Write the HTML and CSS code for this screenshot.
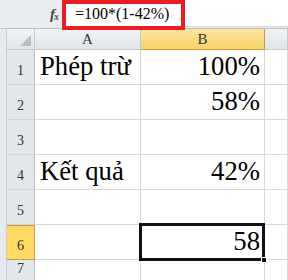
FILE: index.html
```html
<!DOCTYPE html>
<html lang="vi">
<head>
    <meta charset="UTF-8">
    <meta name="viewport" content="width=device-width, initial-scale=1.0">
    <title>Phép trừ phần trăm</title>
    <link rel="stylesheet" href="styles.css">
</head>
<body>
    <div class="formula-bar">
        <div class="fx-box"><span class="fx">f<sub>x</sub></span></div>
        <div class="formula-input">
            <span class="formula-text">=100*(1-42%)</span>
            <span class="highlight"></span>
        </div>
    </div>

    <div class="sheet">
        <div class="side-strip"></div>
        <div class="grid">
            <div class="corner"><span class="corner-mark"></span></div>
            <div class="col-head">A</div>
            <div class="col-head active">B</div>
            <div class="col-head"></div>

            <div class="row-head">1</div>
            <div class="cell">Phép trừ</div>
            <div class="cell num">100%</div>
            <div class="cell"></div>

            <div class="row-head">2</div>
            <div class="cell"></div>
            <div class="cell num">58%</div>
            <div class="cell"></div>

            <div class="row-head">3</div>
            <div class="cell"></div>
            <div class="cell num"></div>
            <div class="cell"></div>

            <div class="row-head">4</div>
            <div class="cell">Kết quả</div>
            <div class="cell num">42%</div>
            <div class="cell"></div>

            <div class="row-head">5</div>
            <div class="cell"></div>
            <div class="cell num"></div>
            <div class="cell"></div>

            <div class="row-head active">6</div>
            <div class="cell"></div>
            <div class="cell num selected">58<span class="sel-frame"><span class="fill-handle"></span></span></div>
            <div class="cell"></div>

            <div class="row-head last">7</div>
            <div class="cell"></div>
            <div class="cell num"></div>
            <div class="cell"></div>
        </div>
    </div>
</body>
</html>
```

FILE: styles.css
```css
/* Global Styles */
* {
    margin: 0;
    padding: 0;
    box-sizing: border-box;
}

body {
    width: 288px;
    height: 280px;
    overflow: hidden;
    background-color: #fff;
    font-family: "Liberation Serif", "Times New Roman", Tinos, "DejaVu Serif", serif;
    color: #000;
}

/* Formula bar */
.formula-bar {
    display: flex;
    height: 29px;
    background-color: #e9ecf0;
    border-bottom: 1px solid #b9bec5;
}

.fx-box {
    width: 62px;
    display: flex;
    justify-content: flex-end;
    align-items: center;
    padding-right: 4px;
}

.fx {
    font-style: italic;
    font-size: 15px;
    color: #4a4a4a;
    font-weight: bold;
    letter-spacing: -1px;
}

.fx sub {
    font-size: 10px;
    vertical-align: baseline;
    position: relative;
    top: 1px;
}

.formula-input {
    flex: 1;
    position: relative;
    background-color: #fff;
    margin-bottom: 1px;
    border-bottom: 1px solid #d4d7dc;
    padding-left: 13px;
    display: flex;
    align-items: center;
    font-size: 16px;
    padding-top: 1px;
}

.highlight {
    position: absolute;
    left: 0;
    top: 0;
    width: 123px;
    height: 30px;
    border: 4px solid #ec1c24;
}

/* Sheet */
.sheet {
    display: flex;
}

.side-strip {
    width: 7px;
    background-color: #e6e9ed;
    border-right: 1px solid #c9cdd2;
}

.grid {
    flex: 1;
    display: grid;
    grid-template-columns: 28px 106px 124px 1fr;
    grid-template-rows: 21px repeat(6, 35px) 21px;
}

.corner,
.col-head,
.row-head {
    background: linear-gradient(#f1f3f5, #e1e4e8);
    border-right: 1px solid #c4c8cd;
    border-bottom: 1px solid #c4c8cd;
    color: #333;
    font-size: 15px;
}

.corner {
    position: relative;
}

.corner-mark {
    position: absolute;
    right: 3px;
    bottom: 3px;
    width: 0;
    height: 0;
    border-left: 11px solid transparent;
    border-bottom: 11px solid #b8bdc3;
}

.col-head {
    display: flex;
    justify-content: center;
    align-items: center;
    padding-top: 1px;
}

.col-head.active {
    background: linear-gradient(#fde59c, #f8d26b);
    border-right-color: #c99a45;
    border-bottom: 1px solid #d9a03c;
}

.row-head {
    display: flex;
    justify-content: center;
    align-items: flex-end;
    padding-bottom: 5px;
    font-size: 14px;
    background: #e3e6ea;
    border-right-color: #b8bdc3;
    border-bottom-color: #d0d4d8;
}

.row-head.last {
    padding-bottom: 4px;
    border-bottom: none;
}

.row-head.active {
    background: #ffd966;
    border: 1px solid #c99a45;
    border-left: none;
}

.cell {
    border-right: 1px solid #d9d9d9;
    border-bottom: 1px solid #d9d9d9;
    font-size: 26.7px;
    line-height: 1;
    display: flex;
    align-items: flex-end;
    padding: 0 5px 4px 5px;
    white-space: nowrap;
}

.num {
    justify-content: flex-end;
    padding-right: 4px;
}

.selected {
    position: relative;
}

.sel-frame {
    position: absolute;
    left: -2px;
    top: -2px;
    right: -1px;
    bottom: -2px;
    border: 3px solid #111;
}

.fill-handle {
    position: absolute;
    right: -5px;
    bottom: -5px;
    width: 6px;
    height: 6px;
    background-color: #111;
    border: 1px solid #fff;
}
```
